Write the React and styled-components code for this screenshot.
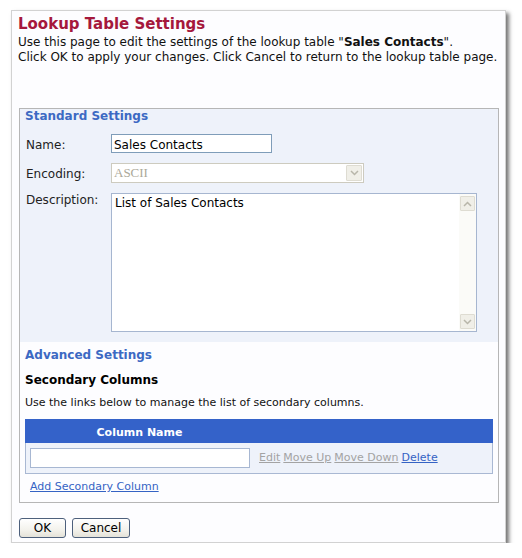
import React from 'react'
import styled, { createGlobalStyle } from 'styled-components'

const GlobalStyle = createGlobalStyle`
  html, body {
    margin: 0;
    padding: 0;
    background: #ffffff;
  }
  body {
    font-family: 'DejaVu Sans', Verdana, sans-serif;
    font-size: 12px;
    color: #000;
  }
`

const Page = styled.div`
  box-sizing: border-box;
  width: 495px;
  margin: 10px 0 0 11px;
  padding: 3px 6px 4px 6px;
  background: #fdfdff;
  border: 1px solid #d2d2d2;
  box-shadow: 3px 3px 4px rgba(0, 0, 0, 0.55);
`

const Title = styled.h1`
  margin: 0;
  font-size: 15px;
  line-height: 20px;
  font-weight: bold;
  color: #a5183c;
`

const Intro = styled.p`
  margin: 1px 0 0;
  font-size: 12px;
  line-height: 15px;
  color: #111;
`

const Box = styled.div`
  box-sizing: border-box;
  width: 480px;
  margin: 43px 0 0 1px;
  border: 1px solid #b6b6b6;
`

const Standard = styled.div`
  background: #eef2fa;
  padding: 0 5px 10px;
`

const SectionTitle = styled.div`
  font-size: 12px;
  line-height: 15px;
  font-weight: bold;
  color: ${(p) => p.$color || '#3c69c3'};
  margin-top: ${(p) => p.$top || 0}px;
`

const Form = styled.div`
  display: grid;
  grid-template-columns: 86px 1fr;
  row-gap: 10px;
  margin-top: 10px;
`

const Label = styled.div`
  padding: ${(p) => p.$pad}px 0 0 1px;
  line-height: 15px;
  color: #222;
`

const TextInput = styled.input`
  box-sizing: border-box;
  width: ${(p) => p.$w}px;
  height: ${(p) => p.$h || 19}px;
  margin: 0;
  padding: 2px 2px 0;
  border: 1px solid ${(p) => p.$border || '#7f9db9'};
  background: #fff;
  font: 12px/15px 'DejaVu Sans', Verdana, sans-serif;
  color: #000;
  outline: none;
`

const Select = styled.div`
  box-sizing: border-box;
  width: 253px;
  height: 20px;
  border: 1px solid #cdcbbf;
  background: #fff;
  display: flex;
  align-items: stretch;
`

const SelectValue = styled.div`
  flex: 1;
  padding-left: 2px;
  font: 13px/18px 'Liberation Serif', 'Times New Roman', serif;
  color: #aca899;
`

const ArrowButton = styled.div`
  box-sizing: border-box;
  width: ${(p) => p.$w || 16}px;
  height: ${(p) => p.$h || 16}px;
  margin: 1px;
  background: #f0efe8;
  border: 1px solid #dedcd2;
  border-radius: 1px;
  display: flex;
  align-items: center;
  justify-content: center;
`

const TextArea = styled.div`
  box-sizing: border-box;
  width: 366px;
  height: 139px;
  border: 1px solid #a6b6d0;
  background: #fff;
  display: flex;
`

const TextAreaText = styled.div`
  flex: 1;
  padding: 2px 3px;
  line-height: 15px;
  color: #000;
`

const ScrollBar = styled.div`
  width: 17px;
  display: flex;
  flex-direction: column;
  justify-content: space-between;
  padding: 1px 0;
  background: #fbfbf8;
`

const Advanced = styled.div`
  padding: 6px 5px 8px;
`

const Note = styled.div`
  margin-top: 8px;
  font-size: 11px;
  line-height: 14px;
  color: #111;
`

const Table = styled.div`
  margin-top: 9px;
  display: grid;
  grid-template-columns: 229px 1fr;
`

const HeadCell = styled.div`
  height: 24px;
  box-sizing: border-box;
  padding-top: 7px;
  background: #3462c9;
  color: #fff;
  font-size: 11px;
  line-height: 14px;
  font-weight: bold;
  text-align: center;
`

const RowCell = styled.div`
  height: 31px;
  box-sizing: border-box;
  background: #eef2fa;
  border-bottom: 1px solid #a9b8d3;
  border-left: ${(p) => (p.$first ? '1px solid #a9b8d3' : 'none')};
  border-right: ${(p) => (p.$last ? '1px solid #a9b8d3' : 'none')};
  padding-left: ${(p) => (p.$first ? 4 : 5)}px;
  display: flex;
  align-items: center;
  gap: 3px;
`

const Link = styled.a`
  font-size: 11px;
  line-height: 14px;
  color: ${(p) => (p.$disabled ? '#a3a3a3' : '#3563c4')};
  text-decoration: underline;
  cursor: ${(p) => (p.$disabled ? 'default' : 'pointer')};
`

const AddLink = styled(Link)`
  display: inline-block;
  margin: 6px 0 0 5px;
`

const Buttons = styled.div`
  display: flex;
  gap: 6px;
  margin: 15px 0 0 1px;
`

const Button = styled.button`
  box-sizing: border-box;
  width: ${(p) => p.$w}px;
  height: 20px;
  margin: 0;
  padding: 0;
  border: 1px solid #4d607c;
  border-radius: 3px;
  background: linear-gradient(#ffffff, #f3f2ec 60%, #e4e2d8);
  font: 12px/16px 'DejaVu Sans', Verdana, sans-serif;
  color: #000;
`

const Chevron = ({ up }) => (
  <svg width="9" height="6" viewBox="0 0 9 6">
    <path
      d={up ? 'M1 5 L4.5 1.5 L8 5' : 'M1 1 L4.5 4.5 L8 1'}
      fill="none"
      stroke="#b8b6aa"
      strokeWidth="1.5"
    />
  </svg>
)

export default function App() {
  return (
    <>
      <GlobalStyle />
      <Page>
        <Title>Lookup Table Settings</Title>
        <Intro>
          Use this page to edit the settings of the lookup table "<b>Sales Contacts</b>".
          <br />
          Click OK to apply your changes. Click Cancel to return to the lookup table page.
        </Intro>

        <Box>
          <Standard>
            <SectionTitle>Standard Settings</SectionTitle>
            <Form>
              <Label $pad={4}>Name:</Label>
              <TextInput $w={161} defaultValue="Sales Contacts" />

              <Label $pad={4}>Encoding:</Label>
              <Select>
                <SelectValue>ASCII</SelectValue>
                <ArrowButton $w={16} $h={16}>
                  <Chevron />
                </ArrowButton>
              </Select>

              <Label $pad={0}>Description:</Label>
              <TextArea>
                <TextAreaText>List of Sales Contacts</TextAreaText>
                <ScrollBar>
                  <ArrowButton $w={15} $h={15}>
                    <Chevron up />
                  </ArrowButton>
                  <ArrowButton $w={15} $h={15}>
                    <Chevron />
                  </ArrowButton>
                </ScrollBar>
              </TextArea>
            </Form>
          </Standard>

          <Advanced>
            <SectionTitle>Advanced Settings</SectionTitle>
            <SectionTitle $color="#000" $top={10}>Secondary Columns</SectionTitle>
            <Note>Use the links below to manage the list of secondary columns.</Note>
            <Table>
              <HeadCell>Column Name</HeadCell>
              <HeadCell />
              <RowCell $first>
                <TextInput $w={220} $h={20} $border="#a7b7d2" />
              </RowCell>
              <RowCell $last>
                <Link $disabled>Edit</Link>
                <Link $disabled>Move Up</Link>
                <Link $disabled>Move Down</Link>
                <Link>Delete</Link>
              </RowCell>
            </Table>
            <AddLink>Add Secondary Column</AddLink>
          </Advanced>
        </Box>

        <Buttons>
          <Button $w={47}>OK</Button>
          <Button $w={58}>Cancel</Button>
        </Buttons>
      </Page>
    </>
  )
}
